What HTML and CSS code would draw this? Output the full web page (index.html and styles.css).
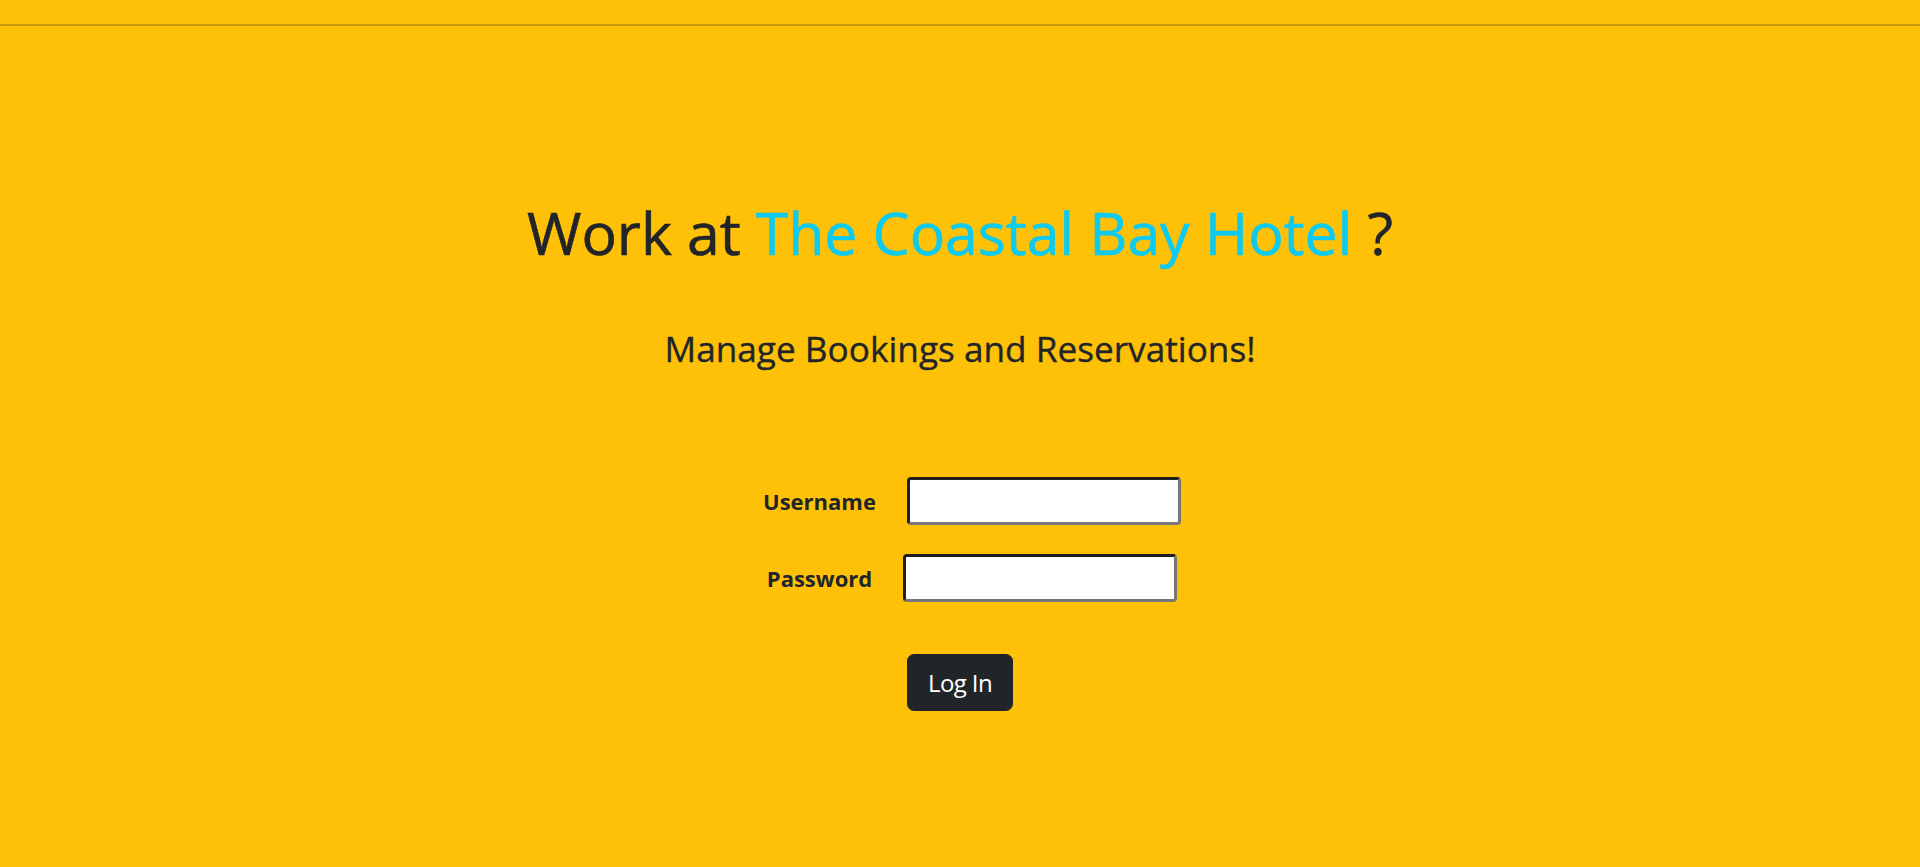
FILE: index.html
```html
<!DOCTYPE html>
<html lang="en">
<head>
<meta charset="utf-8">
<title>The Coastal Bay Hotel - Staff Login</title>
<link rel="stylesheet" href="styles.css">
</head>
<body>
<hr class="top-rule">
<main class="hero">
  <h1 class="title">Work at <span class="brand">The Coastal Bay Hotel</span> ?</h1>
  <h3 class="subtitle">Manage Bookings and Reservations!</h3>
  <form class="login" onsubmit="return false;">
    <div class="field">
      <label class="field-label" for="username">Username</label>
      <input class="field-input" type="text" id="username" name="username">
    </div>
    <div class="field">
      <label class="field-label" for="password">Password</label>
      <input class="field-input" type="password" id="password" name="password">
    </div>
    <div class="actions">
      <button class="btn-login" type="submit">Log In</button>
    </div>
  </form>
</main>
</body>
</html>
```

FILE: styles.css
```css
html, body {
  margin: 0;
  padding: 0;
}

body {
  background: #ffc107;
  color: #212529;
  font-family: "Open Sans", "Noto Sans", "DejaVu Sans", sans-serif;
  min-height: 867px;
}

.top-rule {
  margin: 24px 0 0;
  border: 0;
  border-top: 2px solid #c89a10;
  height: 0;
}

.hero {
  text-align: center;
}

.title {
  margin: 171px 0 0;
  font-size: 59px;
  line-height: 71px;
  font-weight: 400;
  letter-spacing: -0.1px;
  -webkit-text-stroke: 0.6px currentColor;
}

.brand {
  color: #0dcaf0;
}

.subtitle {
  margin: 59px 0 0;
  font-size: 35.2px;
  line-height: 42px;
  font-weight: 400;
  -webkit-text-stroke: 0.35px currentColor;
}

.login {
  margin-top: 108px;
  display: flex;
  flex-direction: column;
  align-items: center;
}

.field {
  display: flex;
  align-items: center;
  justify-content: center;
  gap: 31px;
  height: 48px;
  padding-left: 24px;
}

.field + .field {
  margin-top: 29px;
}

.field-label {
  font-size: 22px;
  font-weight: 700;
  line-height: 48px;
}

.field-input {
  box-sizing: border-box;
  width: 274px;
  height: 48px;
  margin: 0;
  background: #fff;
  border-style: solid;
  border-width: 3px;
  border-color: #1f1f1f #767676 #767676 #1f1f1f;
  border-radius: 4px;
  padding: 1px 4px;
  font-size: 17px;
  font-family: inherit;
}

.actions {
  margin-top: 52px;
}

.btn-login {
  background: #212529;
  color: #fff;
  border: 1px solid #212529;
  border-radius: 7px;
  font-family: inherit;
  font-size: 24px;
  line-height: 35px;
  letter-spacing: -0.6px;
  padding: 10px 20px;
  cursor: pointer;
}
```
